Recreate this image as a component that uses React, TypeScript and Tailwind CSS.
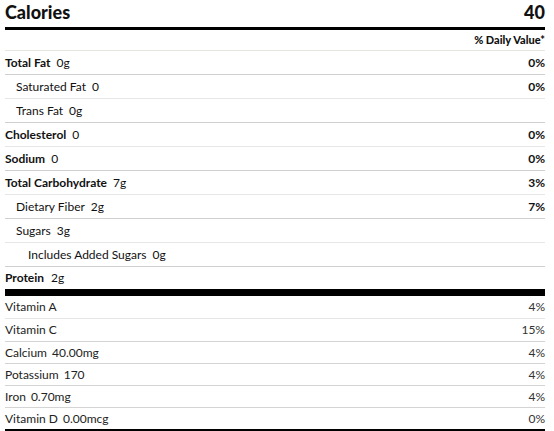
import React from "react";

type Row = { label: string; value: string; pct?: string; bold?: boolean; indent?: number };

const rows: Row[] = [
  { label: "Total Fat", value: "0g", pct: "0%", bold: true },
  { label: "Saturated Fat", value: "0", pct: "0%", indent: 1 },
  { label: "Trans Fat", value: "0g", indent: 1 },
  { label: "Cholesterol", value: "0", pct: "0%", bold: true },
  { label: "Sodium", value: "0", pct: "0%", bold: true },
  { label: "Total Carbohydrate", value: "7g", pct: "3%", bold: true },
  { label: "Dietary Fiber", value: "2g", pct: "7%", indent: 1 },
  { label: "Sugars", value: "3g", indent: 1 },
  { label: "Includes Added Sugars", value: "0g", indent: 2 },
];

const vitamins = [
  { label: "Vitamin A", value: "", pct: "4%", h: "h-[23px]" },
  { label: "Vitamin C", value: "", pct: "15%", h: "h-[23px]" },
  { label: "Calcium", value: "40.00mg", pct: "4%", h: "h-[22px]" },
  { label: "Potassium", value: "170", pct: "4%", h: "h-[22px]" },
  { label: "Iron", value: "0.70mg", pct: "4%", h: "h-[22px]" },
  { label: "Vitamin D", value: "0.00mcg", pct: "0%", h: "h-[21px]" },
];

export default function App() {
  return (
    <div className="w-[554px] h-[431px] bg-white overflow-hidden" style={{ fontFamily: "Lato, 'Open Sans', sans-serif" }}>
      <div className="ml-[5px] w-[540px] text-[12px] text-[#111]">
        <div className="flex justify-between items-center h-[27px] pb-[4px] text-[18px] font-black leading-none">
          <span>Calories</span>
          <span>40</span>
        </div>
        <div className="h-[3px] bg-black" />
        <div className="flex justify-end items-center h-[21px] text-[11px] font-black border-b border-[#e4e6e0]">
          % Daily Value*
        </div>
        {rows.map((r, i) => (
          <div
            key={r.label}
            className={`flex justify-between items-center h-[24px] border-b ${i % 2 === 0 ? "border-[#d0d0d0]" : "border-[#e6e6e6]"}`}
          >
            <span className={r.indent === 2 ? "pl-[23px]" : r.indent === 1 ? "pl-[11px]" : ""}>
              <span className={r.bold ? "font-bold" : ""}>{r.label}</span>
              <span className="ml-[6px]">{r.value}</span>
            </span>
            {r.pct && <span className="font-bold">{r.pct}</span>}
          </div>
        ))}
        <div className="flex items-center h-[22px]">
          <span className="font-bold">Protein</span>
          <span className="ml-[7px]">2g</span>
        </div>
        <div className="h-[7px] bg-black" />
        <div className="text-[#222]">
          {vitamins.map((v, i) => (
            <div
              key={v.label}
              className={`flex justify-between items-center ${v.h} ${i === 5 ? "" : "border-b"} ${i === 0 ? "border-[#e6e6e6]" : "border-[#d4d4d4]"}`}
            >
              <span>
                {v.label}
                {v.value && <span className="ml-[5px]">{v.value}</span>}
              </span>
              <span className="text-[#333]">{v.pct}</span>
            </div>
          ))}
          <div className="h-[3px] bg-black" />
        </div>
      </div>
    </div>
  );
}
